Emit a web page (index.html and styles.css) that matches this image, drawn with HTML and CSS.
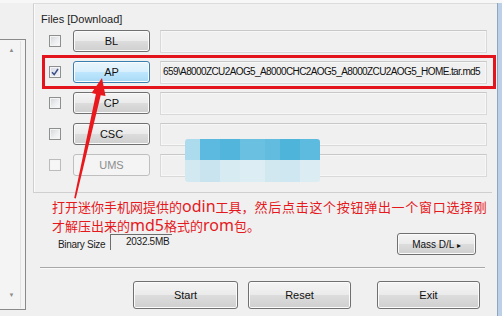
FILE: index.html
```html
<!DOCTYPE html>
<html>
<head>
<meta charset="utf-8">
<link rel="stylesheet" href="styles.css">
</head>
<body>
<div class="window">
  <div class="frame">
    <aside class="listpanel">
      <div class="scrollbar">
        <span class="arrow">&#9650;</span>
        <span class="arrow">&#9660;</span>
      </div>
    </aside>
    <main class="main">
      <section class="group">
        <div class="caption">Files [Download]</div>
        <div class="row">
          <span class="check"></span>
          <button class="btn">BL</button>
          <div class="field"></div>
        </div>
        <div class="row">
          <span class="check checked"><svg width="8" height="8" viewBox="0 0 8 8"><path d="M1 4.2 L3.2 6.6 L7 1" fill="none" stroke="#3b4e86" stroke-width="1.5"/></svg></span>
          <button class="btn active">AP</button>
          <div class="field filled">659\A8000ZCU2AOG5_A8000CHC2AOG5_A8000ZCU2AOG5_HOME.tar.md5</div>
        </div>
        <div class="row">
          <span class="check"></span>
          <button class="btn">CP</button>
          <div class="field"></div>
        </div>
        <div class="row">
          <span class="check"></span>
          <button class="btn">CSC</button>
          <div class="field"></div>
        </div>
        <div class="row">
          <span class="check disabled"></span>
          <button class="btn disabled">UMS</button>
          <div class="field"></div>
        </div>
      </section>
      <div class="sizerow">
        <span class="sizelabel">Binary Size</span>
        <span class="sizebox">2032.5MB</span>
        <button class="btn mass">Mass D/L <span class="tri">&#9656;</span></button>
      </div>
      <div class="separator"></div>
      <div class="actions">
        <button class="btn big">Start</button>
        <button class="btn big reset">Reset</button>
        <button class="btn big exit">Exit</button>
      </div>
    </main>
    <div class="edge"></div>
  </div>

  <div class="redbox"></div>
  <div class="blob">
    <div class="blobrow top">
      <i style="width:15px;background:#acdbed"></i><i style="width:20px;background:#5cb9df"></i><i style="width:20px;background:#52b5db"></i><i style="width:25px;background:#6ac0e1"></i><i style="width:15px;background:#62bce0"></i><i style="width:20px;background:#4fb4da"></i><i style="width:20px;background:#5dbbe0"></i>
    </div>
    <div class="blobrow bottom">
      <i style="width:15px;background:#d3e9f1"></i><i style="width:20px;background:#c9e4ef"></i><i style="width:20px;background:#d7ebf2"></i><i style="width:25px;background:#dcedf3"></i><i style="width:15px;background:#d2e8f0"></i><i style="width:20px;background:#cfe7f0"></i><i style="width:20px;background:#dbecf3"></i>
    </div>
  </div>
  <svg class="arrowsvg" width="502" height="316" viewBox="0 0 502 316">
    <polygon points="102,78 105.5,96 100.7,95.2 75.8,198.5 74.2,198 95.9,94 91.5,93" fill="#e8181c"/>
  </svg>
  <p class="note">打开迷你手机网提供的<span class="lat">odin</span>工具，<span class="wide">然后点击这个按钮弹出一个窗口选择刚</span><br>才解压出来的<span class="lat">md5</span>格式的<span class="lat">rom</span>包。</p>
</div>
</body>
</html>
```

FILE: styles.css
```css
* { box-sizing: border-box; }
html, body { margin: 0; padding: 0; }
body {
  width: 502px;
  height: 316px;
  overflow: hidden;
  background: #f0f0f0;
  font-family: "Liberation Sans", Arial, sans-serif;
  font-size: 11px;
  color: #1a1a1a;
}
.window {
  position: relative;
  width: 502px;
  height: 316px;
  background: #f0f0f0;
}
.frame {
  display: flex;
  height: 316px;
  border-top: 3px solid #f7f7f7;
}
.listpanel {
  width: 26px;
  flex: none;
  margin-top: 36px;
  height: 271px;
  border-top: 1px solid #8a8a8a;
  border-right: 1px solid #8a8a8a;
  border-bottom: 1px solid #8a8a8a;
  background: #f4f4f4;
  padding: 1px 4px 1px 3px;
}
.scrollbar {
  height: 100%;
  display: flex;
  flex-direction: column;
  justify-content: space-between;
  align-items: center;
  padding: 6px 0 10px;
  border-right: 1px solid #e2e2e2;
}
.arrow {
  font-size: 6px;
  line-height: 6px;
  color: #8c8c8c;
}
.main {
  flex: 1;
  display: flex;
  flex-direction: column;
  margin-left: 7px;
  border-top: 1px solid #dcdcdc;
}
.group {
  border-left: 1px solid #cfcfcf;
  border-bottom: 1px solid #cfcfcf;
  box-shadow: inset 1px 0 0 #fbfbfb;
  padding: 9px 0 15px 0;
  margin-right: 5px;
  height: 189px;
}
.caption {
  padding-left: 7px;
  line-height: 12px;
  height: 12px;
  color: #222;
  margin-bottom: 5px;
}
.row {
  display: flex;
  align-items: center;
  height: 22px;
  margin-bottom: 9px;
}
.row:last-child { margin-bottom: 0; }
.check {
  flex: none;
  width: 12px;
  height: 12px;
  margin-left: 15px;
  margin-right: 12px;
  border: 1px solid #8e8f8f;
  background: linear-gradient(135deg, #d2d4d8 0%, #eceef0 55%, #fafafa 100%);
  box-shadow: inset 0 0 0 1px #f4f4f4;
  display: flex;
  align-items: center;
  justify-content: center;
}
.check.checked { background: linear-gradient(135deg, #d8dbe6 0%, #f2f3f7 100%); }
.check.disabled {
  border-color: #bcbcbc;
  background: #f6f6f6;
}
.btn {
  font-family: "Liberation Sans", Arial, sans-serif;
  font-size: 11px;
  color: #111;
  height: 22px;
  padding: 0;
  border: 1px solid #707070;
  border-radius: 3px;
  background: linear-gradient(#f4f4f4 0%, #ebebeb 48%, #dcdcdc 52%, #cfcfcf 100%);
  box-shadow: inset 0 0 0 1px #fbfbfb;
}
.row .btn { width: 77px; flex: none; }
.btn.active {
  border-color: #3c7fb1;
  background: linear-gradient(#eaf6fd 0%, #d9f0fc 48%, #bee6fd 52%, #a7d9f5 100%);
}
.btn.disabled {
  border-color: #bfbfbf;
  background: #f4f4f4;
  color: #8d8d8d;
  box-shadow: none;
}
.field {
  flex: none;
  width: 327px;
  height: 23px;
  margin-left: 10px;
  border: 1px solid #d9d9d9;
  border-top-color: #c8c8c8;
  background: #f0f0f0;
  box-shadow: inset 0 0 0 1px #f7f7f7;
  padding: 3px 0 0 2px;
  font-size: 10px;
  line-height: 13px;
  letter-spacing: -0.6px;
  white-space: nowrap;
  color: #111;
}
.sizerow {
  display: flex;
  align-items: center;
  height: 22px;
  margin-top: 40px;
  padding-left: 25px;
  padding-right: 21px;
}
.sizelabel {
  font-size: 10px;
  letter-spacing: -0.3px;
  color: #222;
  margin-top: 1px;
}
.sizebox {
  margin-left: 5px;
  width: 62px;
  height: 16px;
  border-left: 1px solid #6d6d6d;
  border-top: 1px solid #6d6d6d;
  text-align: right;
  padding-right: 3px;
  font-size: 10px;
  line-height: 14px;
  letter-spacing: -0.3px;
  margin-top: -5px;
}
.btn.mass {
  margin-left: auto;
  width: 79px;
  font-size: 10px;
}
.tri { font-size: 8px; }
.separator {
  height: 0;
  border-top: 1px solid #a8a8a8;
  border-bottom: 1px solid #fafafa;
  margin: 12px 12px 0 7px;
}
.actions {
  display: flex;
  margin-top: 12px;
  padding-left: 100px;
}
.btn.big {
  height: 28px;
  width: 105px;
  font-size: 11px;
}
.btn.reset { margin-left: 10px; width: 103px; }
.btn.exit { margin-left: 26px; width: 103px; }
.edge {
  width: 5px;
  flex: none;
  background: #bcd1e8;
  border-left: 1px solid #8fa6c0;
}
.redbox {
  position: absolute;
  left: 42px;
  top: 55px;
  width: 454px;
  height: 34px;
  border: 3px solid #e3141b;
}
.blob {
  position: absolute;
  left: 185px;
  top: 139px;
  display: flex;
  flex-direction: column;
  border-radius: 3px;
  overflow: hidden;
}
.blobrow { display: flex; height: 21px; }
.blobrow.bottom { height: 22px; }
.blobrow i { display: block; height: 100%; }
.arrowsvg {
  position: absolute;
  left: 0;
  top: 0;
}
.note {
  position: absolute;
  left: 52px;
  top: 197px;
  margin: 0;
  font-family: "Noto Sans CJK SC", "Noto Sans", sans-serif;
  font-size: 13px;
  line-height: 19px;
  color: #e5191d;
  white-space: nowrap;
}
.note .lat {
  font-family: "Noto Sans", sans-serif;
  font-size: 16px;
}
.note .wide { letter-spacing: 0.7px; }
```
